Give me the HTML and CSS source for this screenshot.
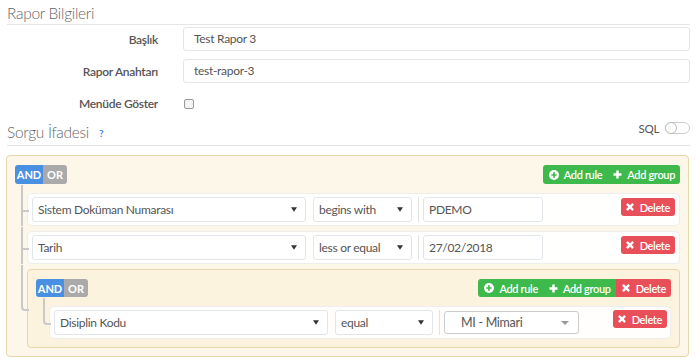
FILE: index.html
```html
<!DOCTYPE html>
<html lang="tr">
<head>
<meta charset="utf-8">
<title>Rapor</title>
<link rel="stylesheet" href="styles.css">
</head>
<body>
<div class="page">
  <div class="legend">Rapor Bilgileri</div>
  <div class="frow"><div class="flabel">Başlık</div><div class="finput">Test Rapor 3</div></div>
  <div class="frow"><div class="flabel">Rapor Anahtarı</div><div class="finput">test-rapor-3</div></div>
  <div class="frow"><div class="flabel">Menüde Göster</div><div class="fcheck"><span class="cbox"></span></div></div>
  <div class="legend2">
    <span class="ltitle">Sorgu İfadesi</span><span class="help">?</span>
    <span class="sqlwrap"><span class="sql">SQL</span><span class="toggle"><span class="knob"></span></span></span>
  </div>

  <div class="group outer">
    <div class="ghead">
      <div class="conds"><span class="cond on">AND</span><span class="cond">OR</span></div>
      <div class="gactions">
        <span class="gbtn green"><svg class="ic" width="10" height="10" viewBox="0 0 11 11"><circle cx="5.5" cy="5.5" r="5.5" fill="#fff"/><path d="M5.5 2.6v5.8M2.6 5.5h5.8" stroke="#3dba4b" stroke-width="1.9"/></svg>Add rule</span>
        <span class="gbtn green"><svg class="ic" width="9" height="9" viewBox="0 0 10 10"><path d="M5 0.5v9M0.5 5h9" stroke="#fff" stroke-width="2.8"/></svg>Add group</span>
      </div>
    </div>
    <ul class="rules">
      <li class="rule">
        <div class="sel field"><span>Sistem Doküman Numarası</span><svg class="caret" width="6" height="5" viewBox="0 0 7 5"><path d="M0 0h7L3.5 5z" fill="#333"/></svg></div>
        <div class="sel op"><span>begins with</span><svg class="caret" width="6" height="5" viewBox="0 0 7 5"><path d="M0 0h7L3.5 5z" fill="#333"/></svg></div>
        <div class="sep"></div>
        <div class="val">PDEMO</div>
        <span class="dbtn"><svg class="ic" width="8" height="8" viewBox="0 0 9 9"><path d="M1 1l7 7M8 1L1 8" stroke="#fff" stroke-width="2.6"/></svg>Delete</span>
      </li>
      <li class="rule">
        <div class="sel field"><span>Tarih</span><svg class="caret" width="6" height="5" viewBox="0 0 7 5"><path d="M0 0h7L3.5 5z" fill="#333"/></svg></div>
        <div class="sel op"><span>less or equal</span><svg class="caret" width="6" height="5" viewBox="0 0 7 5"><path d="M0 0h7L3.5 5z" fill="#333"/></svg></div>
        <div class="sep"></div>
        <div class="val">27/02/2018</div>
        <span class="dbtn"><svg class="ic" width="8" height="8" viewBox="0 0 9 9"><path d="M1 1l7 7M8 1L1 8" stroke="#fff" stroke-width="2.6"/></svg>Delete</span>
      </li>
      <li class="group inner">
        <div class="ghead">
          <div class="conds"><span class="cond on">AND</span><span class="cond">OR</span></div>
          <div class="gactions">
            <span class="gbtn green"><svg class="ic" width="10" height="10" viewBox="0 0 11 11"><circle cx="5.5" cy="5.5" r="5.5" fill="#fff"/><path d="M5.5 2.6v5.8M2.6 5.5h5.8" stroke="#3dba4b" stroke-width="1.9"/></svg>Add rule</span>
            <span class="gbtn green"><svg class="ic" width="9" height="9" viewBox="0 0 10 10"><path d="M5 0.5v9M0.5 5h9" stroke="#fff" stroke-width="2.8"/></svg>Add group</span>
            <span class="gbtn red"><svg class="ic" width="8" height="8" viewBox="0 0 9 9"><path d="M1 1l7 7M8 1L1 8" stroke="#fff" stroke-width="2.6"/></svg>Delete</span>
          </div>
        </div>
        <ul class="rules">
          <li class="rule">
            <div class="sel field"><span>Disiplin Kodu</span><svg class="caret" width="6" height="5" viewBox="0 0 7 5"><path d="M0 0h7L3.5 5z" fill="#333"/></svg></div>
            <div class="sel op"><span>equal</span><svg class="caret" width="6" height="5" viewBox="0 0 7 5"><path d="M0 0h7L3.5 5z" fill="#333"/></svg></div>
            <div class="sep"></div>
            <div class="bsel"><span>MI - Mimari</span><svg class="caret" width="8" height="4" viewBox="0 0 8 4"><path d="M0 0h8L4 4z" fill="#999"/></svg></div>
            <span class="dbtn nest"><svg class="ic" width="8" height="8" viewBox="0 0 9 9"><path d="M1 1l7 7M8 1L1 8" stroke="#fff" stroke-width="2.6"/></svg>Delete</span>
          </li>
        </ul>
      </li>
    </ul>
  </div>
</div>
</body>
</html>
```
FILE: styles.css
```css
* { box-sizing: border-box; }
html, body { margin: 0; padding: 0; background: #fff; }
body {
  font-family: Lato, "Liberation Sans", sans-serif;
  font-size: 12px;
  letter-spacing: -0.3px;
  color: #555;
}
.page { padding: 0 7px; width: 697px; }

.legend {
  font-weight: 300;
  font-size: 15.5px;
  color: #666;
  line-height: 22px;
  padding-top: 2px;
  border-bottom: 1px solid #e5e5e5;
  margin-bottom: 2px;
}
.frow { display: flex; align-items: center; height: 24px; margin-bottom: 8px; }
.flabel {
  width: 151px;
  margin-right: 25px;
  text-align: right;
  font-weight: 600;
  font-size: 12px;
  color: #555;
}
.finput {
  flex: 1;
  height: 24px;
  border: 1px solid #e1e6ea;
  border-radius: 3px;
  padding-left: 10px;
  line-height: 22px;
  color: #555;
}
.fcheck { height: 24px; display: flex; align-items: center; padding-left: 1px; padding-top: 2px; }
.cbox {
  width: 10px; height: 10px;
  border: 1px solid #999;
  border-radius: 2px;
  background: #f4f4f4;
}
.legend2 {
  display: flex;
  align-items: center;
  height: 26px;
  margin-top: -3px;
  border-bottom: 1px solid #e5e5e5;
  padding-bottom: 2px;
}
.ltitle { font-weight: 300; font-size: 15.5px; color: #666; }
.help { color: #3b8ee0; font-weight: 700; font-size: 10px; margin-left: 10px; margin-top: 2px; }
.sqlwrap { margin-left: auto; display: flex; align-items: center; margin-bottom: 7px; }
.sql { font-size: 11.5px; color: #555; margin-right: 6px; }
.toggle {
  width: 25px; height: 12px;
  border: 1px solid #ccc;
  border-radius: 6px;
  position: relative;
  background: #fff;
}
.knob {
  position: absolute; left: -1px; top: -1px;
  width: 12px; height: 12px;
  border-radius: 50%;
  border: 1px solid #bbb;
  background: #fff;
}

.group {
  background: rgba(250, 240, 210, 0.5);
  border: 1px solid #e6d7ab;
  border-radius: 4px;
  padding: 9px 8px 8px 8px;
}
.outer { margin: 9px 1px 0 -1px; }
.ghead { display: flex; justify-content: space-between; align-items: flex-start; height: 19px; }
.inner .ghead { height: 18px; }
.conds { display: flex; height: 19px; border-radius: 3px; overflow: hidden; }
.inner .conds { height: 18px; }
.cond {
  background: #aaa;
  color: #fff;
  font-weight: 700;
  font-size: 11px;
  letter-spacing: 0;
  display: flex; align-items: center;
  width: 24px; justify-content: center;
}
.cond.on { background: #4a90e2; width: 28px; }
.gactions { display: flex; height: 19px; border-radius: 3px; overflow: hidden; }
.inner .gactions { height: 18px; }
.gbtn {
  display: flex; align-items: center;
  color: #fff;
  font-size: 11px;
  font-weight: 600;
  letter-spacing: -0.35px;
  padding: 0 5px 0 6px;
  white-space: nowrap;
}
.gbtn .ic { margin-right: 5px; }
.gbtn.red .ic { margin-right: 6px; }
.green { background: #3dba4b; }
.red { background: #e94f59; }

.rules {
  list-style: none;
  margin: 9px 0 0 0;
  padding: 0 0 0 12px;
  display: flex; flex-direction: column;
  gap: 5px;
}
.inner .rules { padding-left: 13px; }
.rules > li { position: relative; }
.rules > li::before, .rules > li::after {
  content: '';
  position: absolute;
  left: -7px;
  width: 6px;
  border-color: #c9c9c9;
  border-style: solid;
}
.rules > li::before { top: -5px; height: calc(50% + 5px); border-width: 0 0 2px 2px; }
.rules > li:first-child::before { top: -9px; height: calc(50% + 9px); }
.rules > li::after { top: 50%; height: calc(50% + 1px); border-width: 0 0 0 2px; }
.rules > li:last-child::before { border-radius: 0 0 0 4px; }
.rules > li:last-child::after { display: none; }

.rule {
  background: rgba(255, 255, 255, 0.9);
  border: 1px solid #eee;
  border-radius: 5px;
  padding: 3px 4px;
  display: flex;
  align-items: flex-start;
}
.sel {
  height: 25px;
  border: 1px solid #e1e6ea;
  border-radius: 3px;
  background: #fff;
  display: flex; align-items: center; justify-content: space-between;
  padding: 0 8px 0 5px;
  color: #555;
}
.field { width: 274px; margin-right: 7px; }
.op { width: 99px; margin-right: 6px; }
.inner .op { width: 98px; }
.sep { width: 1px; height: 25px; background: #e3e3e3; margin-right: 4px; }
.val {
  width: 120px; height: 25px;
  border: 1px solid #e1e6ea;
  border-radius: 3px;
  background: #fff;
  padding-left: 5px;
  line-height: 23px;
  color: #555;
}
.bsel {
  width: 135px; height: 23px;
  margin-top: 1px;
  border: 1px solid #ccc;
  border-radius: 3px;
  background: #fff;
  display: flex; align-items: center; justify-content: space-between;
  padding: 0 9px 0 16px;
  font-size: 12.5px;
  color: #555;
}
.dbtn {
  margin-left: auto;
  margin-top: 1px;
  height: 18px;
  background: #e94f59;
  color: #fff;
  font-size: 11px;
  font-weight: 600;
  letter-spacing: -0.35px;
  border-radius: 3px;
  display: flex; align-items: center;
  padding: 0 5px;
}
.dbtn .ic { margin-right: 6px; }
.dbtn.nest { margin-top: 0; margin-right: -1px; }
```
